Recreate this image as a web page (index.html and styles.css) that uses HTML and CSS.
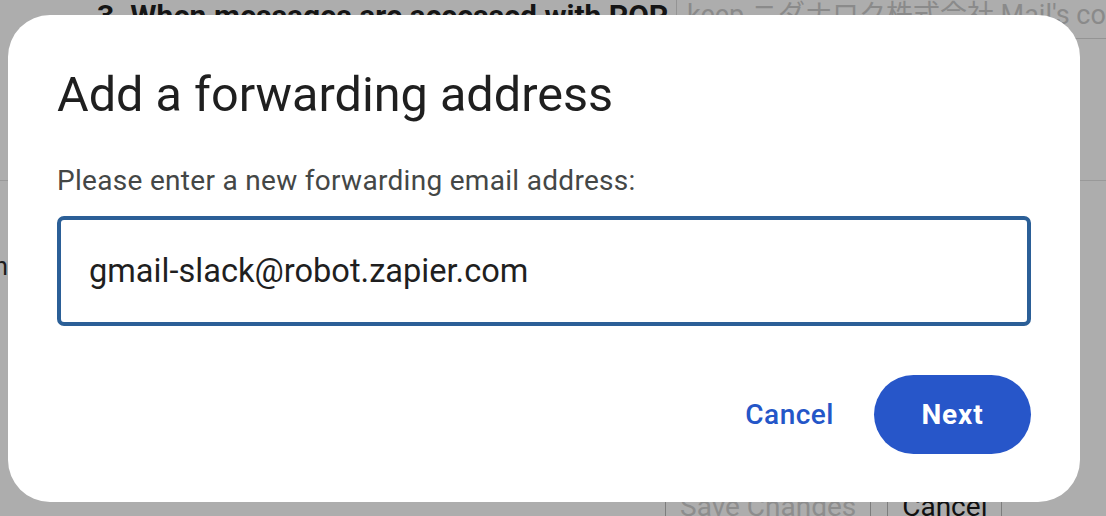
FILE: index.html
```html
<!DOCTYPE html>
<html lang="en">
<head>
<meta charset="utf-8">
<title>Add a forwarding address</title>
<link rel="stylesheet" href="styles.css">
</head>
<body>
<div class="page">
  <div class="pop-row">
    <div class="pop-label">3. When messages are accessed with POP</div>
    <div class="pop-select">keep ニダナロク株式会社 Mail's copy in the Inbox</div>
  </div>
  <div class="section">
    <div class="side-text">Forwarding: Form</div>
  </div>
  <div class="footer">
    <span class="bg-btn disabled">Save Changes</span>
    <span class="bg-btn">Cancel</span>
  </div>

  <div class="dialog" role="dialog" aria-labelledby="dlg-title">
    <h1 class="dialog-title" id="dlg-title">Add a forwarding address</h1>
    <label class="dialog-label" for="fwd">Please enter a new forwarding email address:</label>
    <input class="dialog-input" id="fwd" type="text" value="gmail-slack@robot.zapier.com">
    <div class="dialog-actions">
      <button class="btn-text" type="button">Cancel</button>
      <button class="btn-filled" type="button">Next</button>
    </div>
  </div>
</div>
</body>
</html>
```
FILE: styles.css
```css
* { box-sizing: border-box; }
html, body { margin: 0; padding: 0; }
body {
  width: 1106px;
  height: 516px;
  overflow: hidden;
  font-family: Roboto, "Noto Sans CJK JP", sans-serif;
}
.page {
  position: relative;
  width: 1106px;
  height: 516px;
  overflow: hidden;
  background: #adadad;
  color: #1b1b1b;
}
.pop-row {
  display: flex;
  height: 39px;
}
.pop-label {
  width: 676px;
  padding-left: 97px;
  font-size: 30px;
  font-weight: 700;
  line-height: 32px;
  white-space: nowrap;
  color: #151515;
  overflow: hidden;
}
.pop-select {
  flex: 1;
  border-left: 1px solid #949494;
  border-bottom: 1px solid #949494;
  padding-left: 10px;
  font-size: 27px;
  line-height: 30px;
  color: #8a8a8a;
  white-space: nowrap;
  overflow: hidden;
}
.section {
  margin-top: 141px;
  height: 298px;
  border-top: 1px solid #999;
  padding-top: 72px;
}
.side-text {
  width: 8px;
  display: flex;
  justify-content: flex-end;
  overflow: hidden;
  white-space: nowrap;
  font-size: 25px;
  line-height: 28px;
  color: #1b1b1b;
}
.footer {
  display: flex;
  gap: 16px;
  padding-left: 665px;
}
.bg-btn {
  display: inline-block;
  border: 1px solid #7d7d7d;
  padding: 12px 14px;
  font-size: 28px;
  line-height: 32px;
  color: #111;
}
.bg-btn.disabled { color: #8d8d8d; }

.dialog {
  position: absolute;
  left: 8px;
  top: 15px;
  width: 1072px;
  height: 487px;
  background: #fff;
  border-radius: 42px;
  padding: 51px 49px 48px 49px;
  display: flex;
  flex-direction: column;
}
.dialog-title {
  margin: 0;
  font-size: 48.6px;
  line-height: 57px;
  font-weight: 400;
  color: #1f1f1f;
  letter-spacing: 0;
}
.dialog-label {
  margin-top: 41px;
  font-size: 28px;
  line-height: 33px;
  letter-spacing: 0.3px;
  color: #444746;
}
.dialog-input {
  margin-top: 19px;
  width: 974px;
  height: 110px;
  flex: none;
  border: 4px solid #2b5f97;
  border-radius: 7px;
  padding: 0 0 0 28px;
  font-family: Roboto, sans-serif;
  font-size: 32.6px;
  color: #1f1f1f;
  outline: none;
  background: #fff;
}
.dialog-actions {
  margin-top: auto;
  display: flex;
  justify-content: flex-end;
  align-items: center;
  gap: 16px;
}
.btn-text, .btn-filled {
  font-family: Roboto, sans-serif;
  font-size: 28px;
  font-weight: 500;
  border: none;
  height: 79px;
  border-radius: 40px;
  cursor: pointer;
  letter-spacing: 0.5px;
}
.btn-text {
  background: transparent;
  color: #2456c8;
  padding: 0 24px;
}
.btn-filled {
  width: 157px;
  background: #2756c9;
  color: #fff;
  font-weight: 700;
  letter-spacing: 0.9px;
}
```
